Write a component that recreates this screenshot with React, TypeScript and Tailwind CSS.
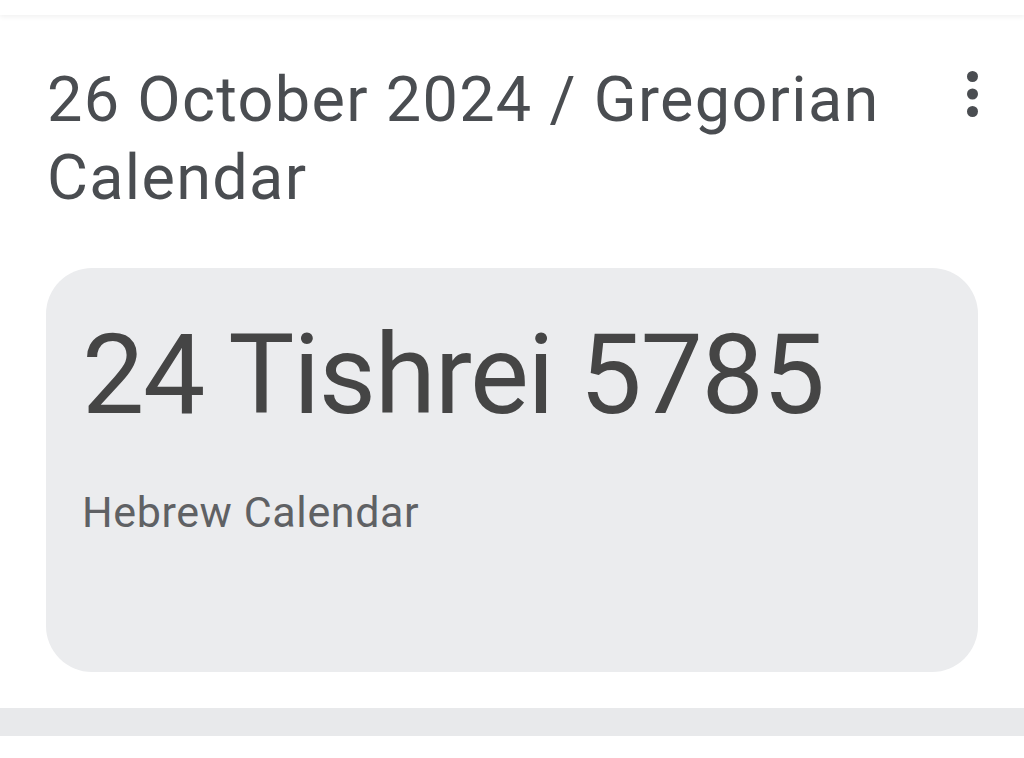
import React from "react";

export default function App() {
  return (
    <div className="w-[1024px] h-[758px] bg-white overflow-hidden flex flex-col" style={{ fontFamily: "Roboto, 'Noto Sans', sans-serif" }}>
      <div className="h-[15px] bg-white shadow-[0_2px_5px_rgba(0,0,0,0.06)] shrink-0" />
      <div className="flex items-start pl-[47px] pr-[46px] pt-[46px]">
        <h1 className="flex-1 text-[63px] leading-[78px] tracking-[1.3px] text-[#4a4d51] font-normal">
          26 October 2024 / Gregorian Calendar
        </h1>
        <svg width="11" height="46" viewBox="0 0 11 46" className="mt-[10px] shrink-0">
          <circle cx="5.5" cy="5.5" r="5.5" fill="#4a4d51" />
          <circle cx="5.5" cy="23" r="5.5" fill="#4a4d51" />
          <circle cx="5.5" cy="40.5" r="5.5" fill="#4a4d51" />
        </svg>
      </div>
      <div className="mx-[46px] mt-[51px] h-[404px] rounded-[46px] bg-[#ebecee] pl-[36px] pt-[52px]">
        <div className="text-[111px] leading-[111px] tracking-[-1.3px] text-[#454545]">24 Tishrei 5785</div>
        <div className="mt-[60px] text-[43px] leading-[42px] tracking-[0.6px] text-[#5f6164]">Hebrew Calendar</div>
      </div>
      <div className="mt-[36px] h-[28px] bg-[#e8e9eb] shrink-0" />
    </div>
  );
}
